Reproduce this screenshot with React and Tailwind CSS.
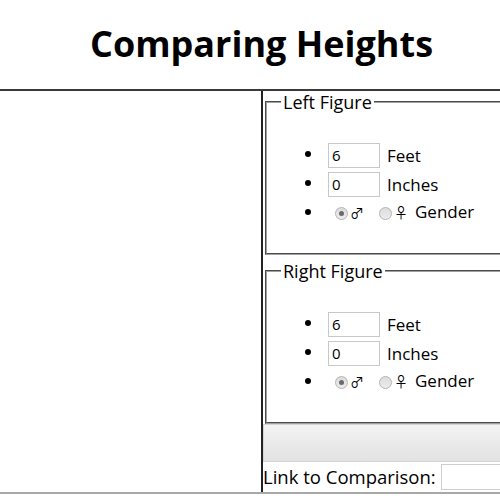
import React from 'react';

const Radio = ({ checked }) => (
    <span className="inline-flex w-[13px] h-[13px] rounded-full border border-[#b4b4b4] bg-gradient-to-b from-[#dcdcdc] to-[#ececec] items-center justify-center align-middle">
        {checked && <span className="w-[5px] h-[5px] rounded-full bg-[#6a6a6a]" />}
    </span>
);

const Figure = ({ title }) => (
    <fieldset className="mx-[2px] px-[14px] pb-[10px] border-2 [border-style:groove] border-[#a0a0a0]">
        <legend className="px-[2px] text-[18px] leading-[22px]">{title}</legend>
        <ul className="list-disc pl-[43px] mt-[28px] mb-[22px]">
            <li className="h-[29px]">
                <input
                    defaultValue="6"
                    className="ml-[4px] w-[52px] h-[25px] border border-[#c8c8c8] px-[3px] text-[15px] align-middle"
                />
                <span className="ml-[7px] align-middle">Feet</span>
            </li>
            <li className="h-[29px]">
                <input
                    defaultValue="0"
                    className="ml-[4px] w-[52px] h-[25px] border border-[#c8c8c8] px-[3px] text-[15px] align-middle"
                />
                <span className="ml-[7px] align-middle">Inches</span>
            </li>
            <li className="h-[22px]">
                <span className="ml-[11px]"><Radio checked /></span>
                <span className="ml-[2px] font-['Noto_Sans_CJK_KR',sans-serif] text-[14px] leading-[20px]">♂</span>
                <span className="ml-[15px]"><Radio /></span>
                <span className="ml-[2px] font-['Noto_Sans_CJK_KR',sans-serif] text-[14px] leading-[20px]">♀</span>
                <span className="ml-[7px]">Gender</span>
            </li>
        </ul>
    </fieldset>
);

export default function App() {
    return (
        <div className="w-[500px] h-[500px] overflow-hidden bg-white text-black font-['Open_Sans',sans-serif] text-[17px]">
            <div className="w-[560px]">
                <h1 className="w-[523px] h-[89px] flex items-center justify-center text-[36px] font-bold pb-[2px]">
                    Comparing Heights
                </h1>
                <div className="flex border-t-2 border-t-[#3a3a3a] border-b-2 border-b-[#a8a8a8]">
                    <div className="w-[263px] shrink-0 border-r-2 border-r-[#222]" />
                    <div className="w-[295px] shrink-0">
                        <Figure title="Left Figure" />
                        <div className="h-[5px]" />
                        <Figure title="Right Figure" />
                        <div className="h-[38px] border border-[#d4d4d4] bg-gradient-to-b from-[#f3f3f3] to-[#e2e2e2]" />
                        <div className="flex items-center h-[30px] whitespace-nowrap">
                            <span className="shrink-0 text-[18.5px]">Link to Comparison:</span>
                            <input className="shrink-0 ml-[5px] w-[100px] h-[26px] border border-[#cfcfcf]" />
                        </div>
                    </div>
                </div>
            </div>
        </div>
    );
}
